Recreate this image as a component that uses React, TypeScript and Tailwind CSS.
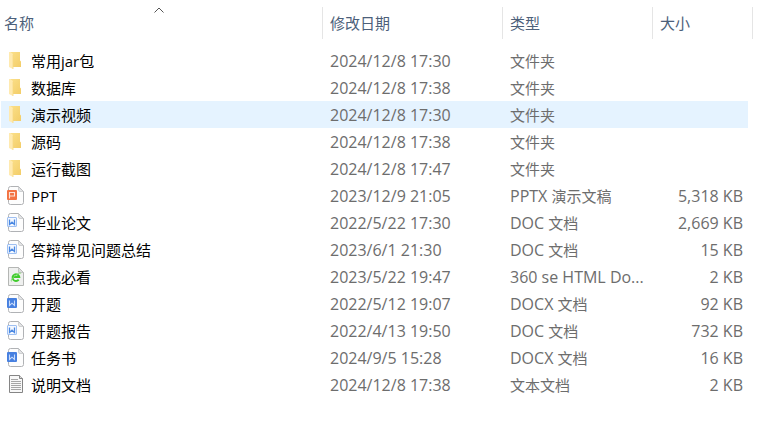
type FileKind = 'folder' | 'ppt' | 'doc' | 'docx' | 'html' | 'text'

type FileItem = {
  name: string
  modified: string
  type: string
  size?: string
  kind: FileKind
  active?: boolean
}

const files: FileItem[] = [
  { name: '常用jar包', modified: '2024/12/8 17:30', type: '文件夹', kind: 'folder' },
  { name: '数据库', modified: '2024/12/8 17:38', type: '文件夹', kind: 'folder' },
  { name: '演示视频', modified: '2024/12/8 17:30', type: '文件夹', kind: 'folder', active: true },
  { name: '源码', modified: '2024/12/8 17:38', type: '文件夹', kind: 'folder' },
  { name: '运行截图', modified: '2024/12/8 17:47', type: '文件夹', kind: 'folder' },
  { name: 'PPT', modified: '2023/12/9 21:05', type: 'PPTX 演示文稿', size: '5,318 KB', kind: 'ppt' },
  { name: '毕业论文', modified: '2022/5/22 17:30', type: 'DOC 文档', size: '2,669 KB', kind: 'doc' },
  { name: '答辩常见问题总结', modified: '2023/6/1 21:30', type: 'DOC 文档', size: '15 KB', kind: 'doc' },
  { name: '点我必看', modified: '2023/5/22 19:47', type: '360 se HTML Do...', size: '2 KB', kind: 'html' },
  { name: '开题', modified: '2022/5/12 19:07', type: 'DOCX 文档', size: '92 KB', kind: 'docx' },
  { name: '开题报告', modified: '2022/4/13 19:50', type: 'DOC 文档', size: '732 KB', kind: 'doc' },
  { name: '任务书', modified: '2024/9/5 15:28', type: 'DOCX 文档', size: '16 KB', kind: 'docx' },
  { name: '说明文档', modified: '2024/12/8 17:38', type: '文本文档', size: '2 KB', kind: 'text' }
]

// Latin runs in the detail columns are set one step larger than the Chinese text
function Detail({ text }: { text: string }) {
  return (
    <>
      {text.split(/([\x20-\x7e]+)/).map((part, i) =>
        i % 2 ? <span key={i} className="text-base leading-5">{part}</span> : part
      )}
    </>
  )
}

function FolderIcon() {
  return (
    <>
      <defs>
        <linearGradient id="folder-back" x1="0" y1="0" x2="1" y2="1">
          <stop offset="0" stopColor="#fbe08a" />
          <stop offset="1" stopColor="#f3cd68" />
        </linearGradient>
      </defs>
      <path d="M4 1h10v8.500l1 1V16H4z" fill="url(#folder-back)" />
      <path d="M3 1h1.200L7 3v15l-4-2z" fill="#ffeab0" />
      <path d="M7 3.500V18" stroke="#f7d882" strokeWidth="0.800" />
    </>
  )
}

function Page() {
  return (
    <>
      <path
        d="M4.500 0.500h8l5 5v11a2 2 0 0 1-2 2h-11a2 2 0 0 1-2-2v-14a2 2 0 0 1 2-2z"
        fill="#fdfdfd"
        stroke="#b0b2b5"
      />
      <path d="M12.500 0.800v3.200a1.500 1.500 0 0 0 1.500 1.500h3.300z" fill="#e6e7e8" stroke="#b8babd" strokeWidth="0.600" />
    </>
  )
}

function FileIcon({ kind }: { kind: FileKind }) {
  return (
    <svg viewBox="0 0 18 20" className="h-5 w-[18px] shrink-0" aria-hidden="true">
      {kind === 'folder' && <FolderIcon />}
      {kind === 'ppt' && (
        <>
          <Page />
          <rect x="1" y="4" width="10" height="10" rx="1" fill="#f37343" />
          <path d="M3.500 12.500V6.500h5v3.500h-5" fill="none" stroke="#fde3d8" strokeWidth="1.100" />
        </>
      )}
      {kind === 'doc' && (
        <>
          <Page />
          <rect x="1.500" y="4.500" width="9" height="9" rx="0.500" fill="#f4f8ff" stroke="#9fc0f2" />
          <path d="M3.500 6.500v5L6 9.200l2.500 2.300v-5" fill="none" stroke="#4a88e2" strokeWidth="1.300" />
        </>
      )}
      {kind === 'docx' && (
        <>
          <Page />
          <rect x="1" y="4" width="10" height="10" rx="1" fill="#4780e0" />
          <path d="M3.500 6.500v5L6 9.200l2.500 2.300v-5" fill="none" stroke="#c9dcfb" strokeWidth="1.100" />
        </>
      )}
      {kind === 'html' && (
        <>
          <path d="M2.500 0.500h10l5 5v13h-15z" fill="#eff0ef" stroke="#b4b6b4" />
          <path d="M12.500 0.500v5h5z" fill="#dcdddc" stroke="#b4b6b4" strokeWidth="0.700" />
          <path d="M12.700 12.600a3.400 3.400 0 1 1 .6-2.600H7" fill="none" stroke="#3fcb2c" strokeWidth="1.900" />
          <path d="M5.800 14.500c-1.500-.5 0-3 3-5.500s6-3.800 6-2.500" fill="none" stroke="#7edb6c" strokeWidth="0.900" />
        </>
      )}
      {kind === 'text' && (
        <>
          <path d="M3.500 0.500h10l3 3v14h-13z" fill="#f8f8f8" stroke="#858585" />
          <path d="M13.500 0.500v3h3" fill="#ddd" stroke="#858585" />
          <path d="M5 4.500h7M5 6.500h10M5 8.500h10M5 10.500h10M5 12.500h10M5 14.500h10" stroke="#a6a6a6" />
        </>
      )}
    </svg>
  )
}

function HeaderCell({ title, sorted }: { title: string; sorted?: boolean }) {
  return (
    <th
      aria-sort={sorted ? 'ascending' : undefined}
      className={sorted ? 'relative border-r border-[#e5e5e5] p-0' : 'border-r border-[#e5e5e5] p-0'}
    >
      <button
        className={
          sorted
            ? 'block h-8 w-full pl-[3px] text-left font-normal'
            : 'block h-8 w-full pl-[7px] text-left font-normal'
        }
      >
        {title}
      </button>
      {sorted && (
        <svg viewBox="0 0 10 6" className="absolute top-0 right-[158px] h-1.5 w-2.5" aria-hidden="true">
          <path d="M0.500 5.500L5 1l4.500 4.500" fill="none" stroke="#555" />
        </svg>
      )}
    </th>
  )
}

function FileRow({ file }: { file: FileItem }) {
  const cell = file.active ? 'bg-[#e5f3ff] p-0 pl-[7px]' : 'p-0 pl-[7px]'

  return (
    <tr className="h-[27px]">
      <td className={file.active ? 'bg-[#e5f3ff] p-0 pl-[5px]' : 'p-0 pl-[5px]'}>
        <div className="flex items-center gap-[7px] text-black">
          <FileIcon kind={file.kind} />
          <span className="truncate leading-5">{file.name}</span>
        </div>
      </td>
      <td className={cell}>
        <Detail text={file.modified} />
      </td>
      <td className={cell}>
        <Detail text={file.type} />
      </td>
      <td className={file.active ? 'bg-[#e5f3ff] p-0 pr-[5px] text-right' : 'p-0 pr-[5px] text-right'}>
        <Detail text={file.size ?? ''} />
      </td>
      <td className="p-0" />
    </tr>
  )
}

export default function App() {
  return (
    <main className="min-h-screen bg-white pt-[7px] pr-1 pl-px font-['Open_Sans','Noto_Sans_CJK_SC',sans-serif] text-[15px] leading-5">
      <table className="w-full table-fixed border-separate border-spacing-0 whitespace-nowrap text-[#6d6d6d]">
        <colgroup>
          <col />
          <col className="w-[180px]" />
          <col className="w-[150px]" />
          <col className="w-[95px]" />
          <col className="w-[5px]" />
        </colgroup>
        <thead className="text-[#4c607a]">
          <tr>
            <HeaderCell title="名称" sorted />
            <HeaderCell title="修改日期" />
            <HeaderCell title="类型" />
            <th className="p-0">
              <button className="block h-8 w-full pl-[7px] text-left font-normal">大小</button>
            </th>
            <td className="border-r border-[#e5e5e5] p-0" />
          </tr>
        </thead>
        <tbody className="before:block before:h-2">
          {files.map((file) => (
            <FileRow key={file.name} file={file} />
          ))}
        </tbody>
      </table>
    </main>
  )
}
